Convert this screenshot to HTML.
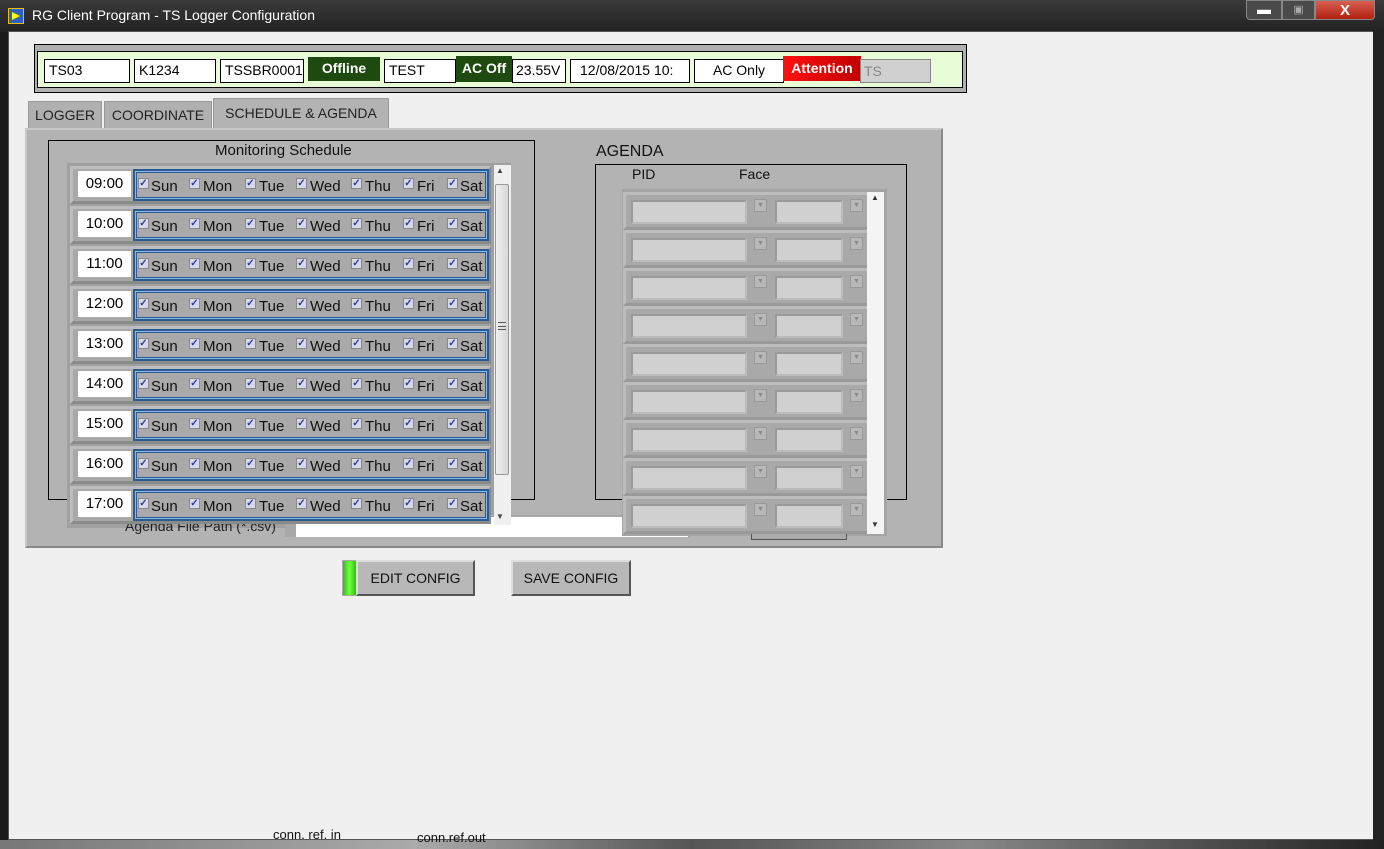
<!DOCTYPE html>
<html><head><meta charset="utf-8"><style>
*{box-sizing:border-box;margin:0;padding:0}
body{width:1384px;height:849px;overflow:hidden;background:#1a1a1a;font-family:"Liberation Sans",sans-serif;position:relative}
.a{position:absolute}
.fld{position:absolute;background:#fff;border:1px solid #000;font-size:14px;line-height:21px;padding-left:4px;color:#000;top:59px;height:24px}
.row{position:absolute;left:70px;width:421px;height:38px;background:#a8a8a8;border-top:3px solid #bdbdbd;border-left:3px solid #bdbdbd;border-bottom:3px solid #8a8a8a;border-right:2px solid #8a8a8a}
.tm{position:absolute;left:5px;top:2px;width:53px;height:26px;background:#fff;font-size:15px;line-height:26px;text-align:center}
.cl{position:absolute;left:60px;top:0px;width:356px;height:32px;border:2px solid #2c5b92;box-shadow:inset 0 0 0 1px #8ab8e8,inset 0 0 0 2px #2c5b92;background:#a9a9a9}
.cb{position:absolute;top:7px;width:11px;height:11px;background:#d8d8e8;border:1px solid #888;font-size:10px;line-height:9px;color:#2a3d9a;text-align:center;font-weight:bold}
.lb{position:absolute;top:7px;font-size:15px;line-height:18px;color:#111}
.arow{position:absolute;left:623px;width:244px;height:38px;background:#a9a9a9;border-top:3px solid #bcbcbc;border-left:3px solid #bcbcbc;border-bottom:3px solid #999}
.pf{position:absolute;left:5px;top:5px;width:116px;height:24px;background:#d0d0d0;border:2px solid #bbb;border-top-color:#9a9a9a;border-left-color:#9a9a9a}
.ff{position:absolute;left:149px;top:5px;width:68px;height:24px;background:#d0d0d0;border:2px solid #bbb;border-top-color:#9a9a9a;border-left-color:#9a9a9a}
.dd{position:absolute;top:4px;width:13px;height:13px;border:1px solid #999;background:#b8b8b8;font-size:7px;color:#888;text-align:center;line-height:11px}
</style></head><body>
<!-- title bar -->
<div class="a" style="left:0;top:0;width:1384px;height:32px;background:linear-gradient(#3a3a3a,#222)"></div>
<div class="a" style="left:8px;top:8px;width:16px;height:16px;background:#3060c0;border:1px solid #f0c000"><div class="a" style="left:3px;top:3px;width:0;height:0;border-left:8px solid #ff0;border-top:4px solid transparent;border-bottom:4px solid transparent"></div></div>
<div class="a" style="left:32px;top:7px;font-size:14px;color:#fff">RG Client Program - TS Logger Configuration</div>
<div class="a" style="left:1246px;top:0;width:36px;height:20px;background:#4a4a4a;border:1px solid #888;border-radius:0 0 0 4px;color:#fff;font-size:14px;text-align:center;line-height:16px">▬</div>
<div class="a" style="left:1282px;top:0;width:33px;height:20px;background:#4a4a4a;border:1px solid #888;color:#aaa;font-size:11px;text-align:center;line-height:18px">▣</div>
<div class="a" style="left:1315px;top:0;width:60px;height:20px;background:linear-gradient(#d86050,#b02010);border:1px solid #888;border-radius:0 0 4px 0;color:#fff;font-size:15px;font-weight:bold;text-align:center;line-height:19px">X</div>
<!-- client area -->
<div class="a" style="left:8px;top:31px;width:1366px;height:809px;background:#f0f0f0;border:1px solid #555"></div>
<div class="a" style="left:1373px;top:31px;width:11px;height:818px;background:#222"></div>
<div class="a" style="left:0;top:840px;width:1384px;height:9px;background:linear-gradient(90deg,#777,#aaa 30%,#555 50%,#888 70%,#222)"></div>
<!-- header -->
<div class="a" style="left:34px;top:44px;width:933px;height:49px;background:#b0b0b0;border:1px solid #000"></div>
<div class="a" style="left:37px;top:51px;width:926px;height:37px;background:#e8fcd8;border:1px solid #000"></div>
<div class="fld" style="left:44px;width:86px">TS03</div>
<div class="fld" style="left:134px;width:82px">K1234</div>
<div class="fld" style="left:220px;width:84px">TSSBR0001</div>
<div class="a" style="left:308px;top:57px;width:72px;height:24px;background:#1e4a10;color:#fff;font-weight:bold;font-size:14px;text-align:center;line-height:22px">Offline</div>
<div class="fld" style="left:384px;width:72px">TEST</div>
<div class="a" style="left:456px;top:56px;width:56px;height:26px;background:#1e4a10;color:#fff;font-weight:bold;font-size:14px;text-align:center;line-height:24px">AC Off</div>
<div class="fld" style="left:512px;width:54px;padding-left:3px">23.55V</div>
<div class="fld" style="left:570px;width:120px;padding-left:9px">12/08/2015 10:</div>
<div class="fld" style="left:694px;width:90px;text-align:center;padding:0">AC Only</div>
<div class="a" style="left:783px;top:56px;width:78px;height:25px;background:linear-gradient(90deg,#ff1010,#c00000);color:#fff;font-weight:bold;font-size:14px;text-align:center;line-height:24px">Attention</div>
<div class="a" style="left:860px;top:59px;width:71px;height:24px;background:#d0d0d0;border:1px solid #888;font-size:14px;color:#888;line-height:22px;padding-left:3px">TS</div>
<!-- tabs -->
<div class="a" style="left:28px;top:101px;width:74px;height:28px;background:#b0b0b0;border:1px solid #999;font-size:14px;line-height:27px;text-align:center;color:#222">LOGGER</div>
<div class="a" style="left:104px;top:101px;width:108px;height:28px;background:#b0b0b0;border:1px solid #999;font-size:14px;line-height:27px;text-align:center;color:#222">COORDINATE</div>
<div class="a" style="left:213px;top:98px;width:176px;height:32px;background:#b3b3b3;border:1px solid #999;border-bottom:none;font-size:14px;line-height:28px;text-align:center;color:#222">SCHEDULE &amp; AGENDA</div>
<div class="a" style="left:25px;top:128px;width:918px;height:420px;background:#b3b3b3;border:2px solid #c8c8c8;border-right-color:#888;border-bottom-color:#888"></div>
<!-- monitoring schedule -->
<div class="a" style="left:48px;top:140px;width:487px;height:360px;border:1px solid #000"></div>
<div class="a" style="left:215px;top:142px;font-size:15px;color:#111">Monitoring Schedule</div>
<div class="a" style="left:67px;top:163px;width:444px;height:365px;background:#a0a0a0"></div>
<div class="a" style="left:125px;top:518px;font-size:14px;color:#222">Agenda File Path (*.csv)</div>
<div class="a" style="left:285px;top:515px;width:405px;height:22px;background:#a8a8a8"></div>
<div class="a" style="left:296px;top:517px;width:392px;height:20px;background:#fff"></div>

<div class="row" style="top:166px"><div class="tm">09:00</div><div class="cl"><div class="cb" style="left:3px">✓</div><div class="lb" style="left:16px">Sun</div><div class="cb" style="left:54px">✓</div><div class="lb" style="left:68px">Mon</div><div class="cb" style="left:110px">✓</div><div class="lb" style="left:124px">Tue</div><div class="cb" style="left:161px">✓</div><div class="lb" style="left:175px">Wed</div><div class="cb" style="left:216px">✓</div><div class="lb" style="left:230px">Thu</div><div class="cb" style="left:268px">✓</div><div class="lb" style="left:282px">Fri</div><div class="cb" style="left:312px">✓</div><div class="lb" style="left:325px">Sat</div></div></div>
<div class="row" style="top:206px"><div class="tm">10:00</div><div class="cl"><div class="cb" style="left:3px">✓</div><div class="lb" style="left:16px">Sun</div><div class="cb" style="left:54px">✓</div><div class="lb" style="left:68px">Mon</div><div class="cb" style="left:110px">✓</div><div class="lb" style="left:124px">Tue</div><div class="cb" style="left:161px">✓</div><div class="lb" style="left:175px">Wed</div><div class="cb" style="left:216px">✓</div><div class="lb" style="left:230px">Thu</div><div class="cb" style="left:268px">✓</div><div class="lb" style="left:282px">Fri</div><div class="cb" style="left:312px">✓</div><div class="lb" style="left:325px">Sat</div></div></div>
<div class="row" style="top:246px"><div class="tm">11:00</div><div class="cl"><div class="cb" style="left:3px">✓</div><div class="lb" style="left:16px">Sun</div><div class="cb" style="left:54px">✓</div><div class="lb" style="left:68px">Mon</div><div class="cb" style="left:110px">✓</div><div class="lb" style="left:124px">Tue</div><div class="cb" style="left:161px">✓</div><div class="lb" style="left:175px">Wed</div><div class="cb" style="left:216px">✓</div><div class="lb" style="left:230px">Thu</div><div class="cb" style="left:268px">✓</div><div class="lb" style="left:282px">Fri</div><div class="cb" style="left:312px">✓</div><div class="lb" style="left:325px">Sat</div></div></div>
<div class="row" style="top:286px"><div class="tm">12:00</div><div class="cl"><div class="cb" style="left:3px">✓</div><div class="lb" style="left:16px">Sun</div><div class="cb" style="left:54px">✓</div><div class="lb" style="left:68px">Mon</div><div class="cb" style="left:110px">✓</div><div class="lb" style="left:124px">Tue</div><div class="cb" style="left:161px">✓</div><div class="lb" style="left:175px">Wed</div><div class="cb" style="left:216px">✓</div><div class="lb" style="left:230px">Thu</div><div class="cb" style="left:268px">✓</div><div class="lb" style="left:282px">Fri</div><div class="cb" style="left:312px">✓</div><div class="lb" style="left:325px">Sat</div></div></div>
<div class="row" style="top:326px"><div class="tm">13:00</div><div class="cl"><div class="cb" style="left:3px">✓</div><div class="lb" style="left:16px">Sun</div><div class="cb" style="left:54px">✓</div><div class="lb" style="left:68px">Mon</div><div class="cb" style="left:110px">✓</div><div class="lb" style="left:124px">Tue</div><div class="cb" style="left:161px">✓</div><div class="lb" style="left:175px">Wed</div><div class="cb" style="left:216px">✓</div><div class="lb" style="left:230px">Thu</div><div class="cb" style="left:268px">✓</div><div class="lb" style="left:282px">Fri</div><div class="cb" style="left:312px">✓</div><div class="lb" style="left:325px">Sat</div></div></div>
<div class="row" style="top:366px"><div class="tm">14:00</div><div class="cl"><div class="cb" style="left:3px">✓</div><div class="lb" style="left:16px">Sun</div><div class="cb" style="left:54px">✓</div><div class="lb" style="left:68px">Mon</div><div class="cb" style="left:110px">✓</div><div class="lb" style="left:124px">Tue</div><div class="cb" style="left:161px">✓</div><div class="lb" style="left:175px">Wed</div><div class="cb" style="left:216px">✓</div><div class="lb" style="left:230px">Thu</div><div class="cb" style="left:268px">✓</div><div class="lb" style="left:282px">Fri</div><div class="cb" style="left:312px">✓</div><div class="lb" style="left:325px">Sat</div></div></div>
<div class="row" style="top:406px"><div class="tm">15:00</div><div class="cl"><div class="cb" style="left:3px">✓</div><div class="lb" style="left:16px">Sun</div><div class="cb" style="left:54px">✓</div><div class="lb" style="left:68px">Mon</div><div class="cb" style="left:110px">✓</div><div class="lb" style="left:124px">Tue</div><div class="cb" style="left:161px">✓</div><div class="lb" style="left:175px">Wed</div><div class="cb" style="left:216px">✓</div><div class="lb" style="left:230px">Thu</div><div class="cb" style="left:268px">✓</div><div class="lb" style="left:282px">Fri</div><div class="cb" style="left:312px">✓</div><div class="lb" style="left:325px">Sat</div></div></div>
<div class="row" style="top:446px"><div class="tm">16:00</div><div class="cl"><div class="cb" style="left:3px">✓</div><div class="lb" style="left:16px">Sun</div><div class="cb" style="left:54px">✓</div><div class="lb" style="left:68px">Mon</div><div class="cb" style="left:110px">✓</div><div class="lb" style="left:124px">Tue</div><div class="cb" style="left:161px">✓</div><div class="lb" style="left:175px">Wed</div><div class="cb" style="left:216px">✓</div><div class="lb" style="left:230px">Thu</div><div class="cb" style="left:268px">✓</div><div class="lb" style="left:282px">Fri</div><div class="cb" style="left:312px">✓</div><div class="lb" style="left:325px">Sat</div></div></div>
<div class="row" style="top:486px"><div class="tm">17:00</div><div class="cl"><div class="cb" style="left:3px">✓</div><div class="lb" style="left:16px">Sun</div><div class="cb" style="left:54px">✓</div><div class="lb" style="left:68px">Mon</div><div class="cb" style="left:110px">✓</div><div class="lb" style="left:124px">Tue</div><div class="cb" style="left:161px">✓</div><div class="lb" style="left:175px">Wed</div><div class="cb" style="left:216px">✓</div><div class="lb" style="left:230px">Thu</div><div class="cb" style="left:268px">✓</div><div class="lb" style="left:282px">Fri</div><div class="cb" style="left:312px">✓</div><div class="lb" style="left:325px">Sat</div></div></div>
<!-- schedule scrollbar -->
<div class="a" style="left:494px;top:165px;width:17px;height:360px;background:#f0f0f0"></div>
<div class="a" style="left:496px;top:166px;font-size:8px;color:#444">▲</div>
<div class="a" style="left:496px;top:512px;font-size:8px;color:#444">▼</div>
<div class="a" style="left:495px;top:184px;width:14px;height:291px;background:linear-gradient(90deg,#eee,#d8d8d8);border:1px solid #999;border-radius:2px"></div>
<div class="a" style="left:498px;top:322px;width:8px;height:8px;border-top:1px solid #555;border-bottom:1px solid #555"><div style="margin-top:3px;border-top:1px solid #555"></div></div>
<!-- agenda -->
<div class="a" style="left:596px;top:143px;font-size:16px;color:#111">AGENDA</div>
<div class="a" style="left:595px;top:164px;width:312px;height:336px;border:1px solid #000"></div>
<div class="a" style="left:632px;top:166px;font-size:14px;color:#111">PID</div>
<div class="a" style="left:739px;top:166px;font-size:14px;color:#111">Face</div>
<div class="a" style="left:622px;top:189px;width:265px;height:347px;background:#a4a4a4"></div>
<div class="a" style="left:867px;top:192px;width:17px;height:342px;background:#f4f4f4"></div>
<div class="a" style="left:871px;top:193px;font-size:8px;color:#333">▲</div>
<div class="a" style="left:871px;top:520px;font-size:8px;color:#333">▼</div>
<div class="a" style="left:751px;top:528px;width:96px;height:12px;border:1px solid #555;border-top:none;background:#aaa"></div>

<div class="arow" style="top:192px"><div class="pf"></div><div class="dd" style="left:128px">▼</div><div class="ff"></div><div class="dd" style="left:224px">▼</div></div>
<div class="arow" style="top:230px"><div class="pf"></div><div class="dd" style="left:128px">▼</div><div class="ff"></div><div class="dd" style="left:224px">▼</div></div>
<div class="arow" style="top:268px"><div class="pf"></div><div class="dd" style="left:128px">▼</div><div class="ff"></div><div class="dd" style="left:224px">▼</div></div>
<div class="arow" style="top:306px"><div class="pf"></div><div class="dd" style="left:128px">▼</div><div class="ff"></div><div class="dd" style="left:224px">▼</div></div>
<div class="arow" style="top:344px"><div class="pf"></div><div class="dd" style="left:128px">▼</div><div class="ff"></div><div class="dd" style="left:224px">▼</div></div>
<div class="arow" style="top:382px"><div class="pf"></div><div class="dd" style="left:128px">▼</div><div class="ff"></div><div class="dd" style="left:224px">▼</div></div>
<div class="arow" style="top:420px"><div class="pf"></div><div class="dd" style="left:128px">▼</div><div class="ff"></div><div class="dd" style="left:224px">▼</div></div>
<div class="arow" style="top:458px"><div class="pf"></div><div class="dd" style="left:128px">▼</div><div class="ff"></div><div class="dd" style="left:224px">▼</div></div>
<div class="arow" style="top:496px"><div class="pf"></div><div class="dd" style="left:128px">▼</div><div class="ff"></div><div class="dd" style="left:224px">▼</div></div>
<!-- buttons -->
<div class="a" style="left:342px;top:560px;width:15px;height:36px;background:linear-gradient(90deg,#30c010,#70ff40,#30c010);border:1px solid #aaa"></div>
<div class="a" style="left:356px;top:560px;width:119px;height:36px;background:#b8b8b8;border:2px solid #555;border-top-color:#ddd;border-left-color:#ddd;font-size:14px;text-align:center;line-height:32px;color:#111">EDIT CONFIG</div>
<div class="a" style="left:511px;top:560px;width:120px;height:36px;background:#b8b8b8;border:2px solid #555;border-top-color:#ddd;border-left-color:#ddd;font-size:14px;text-align:center;line-height:32px;color:#111">SAVE CONFIG</div>
<div class="a" style="left:273px;top:827px;font-size:13px;color:#111">conn. ref. in</div>
<div class="a" style="left:417px;top:830px;font-size:13px;color:#111">conn.ref.out</div>
</body></html>
